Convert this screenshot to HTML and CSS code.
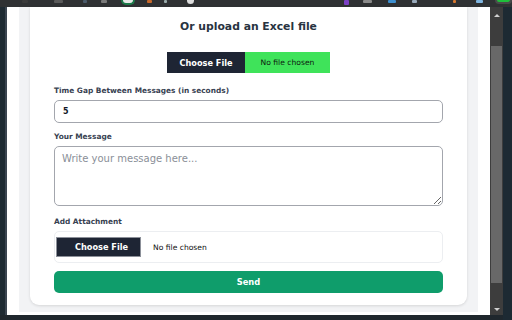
FILE: index.html
```html
<!DOCTYPE html>
<html lang="en">
<head>
<meta charset="utf-8">
<title>Upload</title>
<link rel="stylesheet" href="styles.css">
</head>
<body>
<div class="toolbar">
  <span class="tb tb-a"></span>
  <span class="tb tb-b"></span>
  <span class="tb tb-c"></span>
  <span class="tb tb-d"></span>
  <span class="tb tb-round"></span>
  <span class="tb tb-orange"></span>
  <span class="tb tb-e"></span>
  <span class="tb tb-f"></span>
  <span class="tb tb-purple"></span>
  <span class="tb tb-g"></span>
  <span class="tb tb-blue"></span>
  <span class="tb tb-h"></span>
  <span class="tb tb-orange2"></span>
  <span class="tb tb-blue2"></span>
  <span class="tb tb-green"></span>
</div>
<div class="frame">
  <div class="edge-left"></div>
  <div class="popup">
    <div class="page">
      <div class="card">
        <h2 class="title">Or upload an Excel file</h2>
        <div class="excel-row">
          <div class="excel-file">
            <span class="excel-btn">Choose File</span>
            <span class="excel-name">No file chosen</span>
          </div>
        </div>
        <label class="label">Time Gap Between Messages (in seconds)</label>
        <input class="field" type="text" value="5">
        <label class="label label-msg">Your Message</label>
        <textarea class="area" placeholder="Write your message here..."></textarea>
        <label class="label label-att">Add Attachment</label>
        <div class="attach">
          <span class="attach-btn">Choose File</span>
          <span class="attach-name">No file chosen</span>
        </div>
        <button class="send" type="button">Send</button>
      </div>
    </div>
  </div>
  <div class="scrollbar">
    <span class="arrow-up"></span>
    <span class="thumb"></span>
    <span class="arrow-down"></span>
  </div>
  <div class="edge-right"></div>
</div>
</body>
</html>
```
FILE: styles.css
```css
* { box-sizing: border-box; }
html, body { margin: 0; padding: 0; }
body {
  width: 512px;
  height: 320px;
  overflow: hidden;
  background: #1f272d;
  font-family: "DejaVu Sans", "Noto Sans", sans-serif;
}
.toolbar {
  height: 7px;
  background: #2f3133;
  display: flex;
  align-items: flex-start;
  padding-left: 22px;
  overflow: hidden;
}
.tb { display: block; height: 3px; width: 8px; background: #555; border-radius: 1px; margin-right: 14px; }
.tb-a { background: #3a3a3a; margin-right: 26px; }
.tb-b { width: 12px; background: #5a5a5a; margin-right: 20px; }
.tb-c { width: 6px; background: #4a5a6a; margin-right: 14px; }
.tb-d { width: 8px; background: #7a7a7a; margin-right: 14px; }
.tb-round { width: 18px; height: 5px; border-radius: 0 0 9px 9px; background: #e8e8e8; border: 2px solid #1c7a4a; border-top: 0; margin-right: 12px; }
.tb-orange { width: 7px; background: #c8682a; margin-right: 12px; }
.tb-e { width: 5px; background: #9aa; margin-right: 20px; }
.tb-f { width: 9px; height: 4px; background: #ddd; border-radius: 0 0 5px 5px; margin-right: 150px; }
.tb-purple { width: 7px; height: 5px; background: #7b3fc4; margin-right: 14px; }
.tb-g { width: 12px; background: #8a8a8a; margin-right: 16px; }
.tb-blue { width: 12px; background: #3d8fd0; margin-right: 16px; }
.tb-h { width: 6px; background: #9ab; margin-right: 36px; }
.tb-orange2 { width: 4px; background: #d7772e; margin-right: 20px; }
.tb-blue2 { width: 10px; background: #7fb5e0; margin-right: 12px; }
.tb-green { width: 22px; height: 4px; background: #1fbf3b; border: 2px solid #4a4a4a; border-top: 0; border-radius: 0 0 12px 12px; margin-right: 0; }

.frame { display: flex; height: 313px; }
.edge-left {
  width: 7px;
  height: 308px;
  background: #1e2a32;
  border-right: 2px solid #3b4550;
}
.popup {
  width: 483px;
  height: 308px;
  background: #ffffff;
  padding: 0 12px 3px;
}
.page {
  height: 305px;
  background: #f2f3f5;
  padding: 0 11px 7px;
}
.card {
  height: 298px;
  background: #ffffff;
  border-radius: 0 0 9px 9px;
  box-shadow: 0 1px 3px rgba(0,0,0,0.12);
  padding: 13px 24px 12px;
  display: flex;
  flex-direction: column;
}
.title {
  margin: 0;
  text-align: center;
  font-size: 10.8px;
  line-height: 14px;
  font-weight: 700;
  color: #283341;
}
.excel-row { display: flex; justify-content: center; margin-top: 18px; }
.excel-file { display: flex; height: 21px; }
.excel-btn {
  width: 78px;
  background: #1e2534;
  color: #ffffff;
  font-size: 8.2px;
  font-weight: 700;
  display: flex; align-items: center; justify-content: center;
}
.excel-name {
  width: 85px;
  background: #3fe35a;
  color: #0d1a10;
  font-size: 7.6px;
  display: flex; align-items: center; justify-content: center;
}
.label {
  display: block;
  margin-top: 12px;
  font-size: 7.4px;
  line-height: 12px;
  font-weight: 700;
  color: #374151;
}
.label-msg { margin-top: 8px; }
.label-att { margin-top: 10px; }
.field {
  margin-top: 3px;
  width: 100%;
  height: 23px;
  border: 1px solid #a3a6ad;
  border-radius: 5px;
  padding: 0 8px;
  font-family: inherit;
  font-size: 8px;
  font-weight: 700;
  color: #111827;
  background: #fff;
  outline: none;
}
.area {
  margin-top: 3px;
  width: 100%;
  height: 60px;
  border: 1px solid #a3a6ad;
  border-radius: 5px;
  padding: 6px 7px;
  font-family: inherit;
  font-size: 10px;
  color: #111827;
  background: #fff;
  resize: vertical;
  outline: none;
}
.area::placeholder { color: #8a8f98; }
.attach {
  margin-top: 3px;
  height: 32px;
  border: 1px solid #eceef1;
  border-radius: 5px;
  background: #ffffff;
  display: flex;
  align-items: center;
  padding-left: 1px;
}
.attach-btn {
  width: 85px;
  height: 20px;
  background: #1e2534;
  border: 1px solid #8c9099;
  color: #ffffff;
  font-size: 8.2px;
  font-weight: 700;
  display: flex; align-items: center; justify-content: center;
  padding-left: 6px;
}
.attach-name {
  margin-left: 12px;
  font-size: 7.6px;
  color: #111;
}
.send {
  margin-top: 8px;
  width: 100%;
  height: 22px;
  border: 0;
  border-radius: 5px;
  background: #0f9d6b;
  color: #ffffff;
  font-family: inherit;
  font-size: 8.3px;
  font-weight: 700;
  padding-top: 1px;
}
.scrollbar {
  width: 13px;
  height: 308px;
  background: #3d3d3d;
  display: flex;
  flex-direction: column;
  align-items: center;
  padding: 7px 0 4px;
}
.arrow-up, .arrow-down { display: block; width: 0; height: 0; border-left: 3px solid transparent; border-right: 3px solid transparent; }
.arrow-up { border-bottom: 3px solid #d0d0d0; }
.arrow-down { border-top: 3px solid #d0d0d0; margin-top: auto; }
.thumb { display: block; width: 11px; height: 237px; margin-top: 29px; background: #686868; }
.edge-right { width: 9px; background: #1d2a33; height: 313px; }
```
